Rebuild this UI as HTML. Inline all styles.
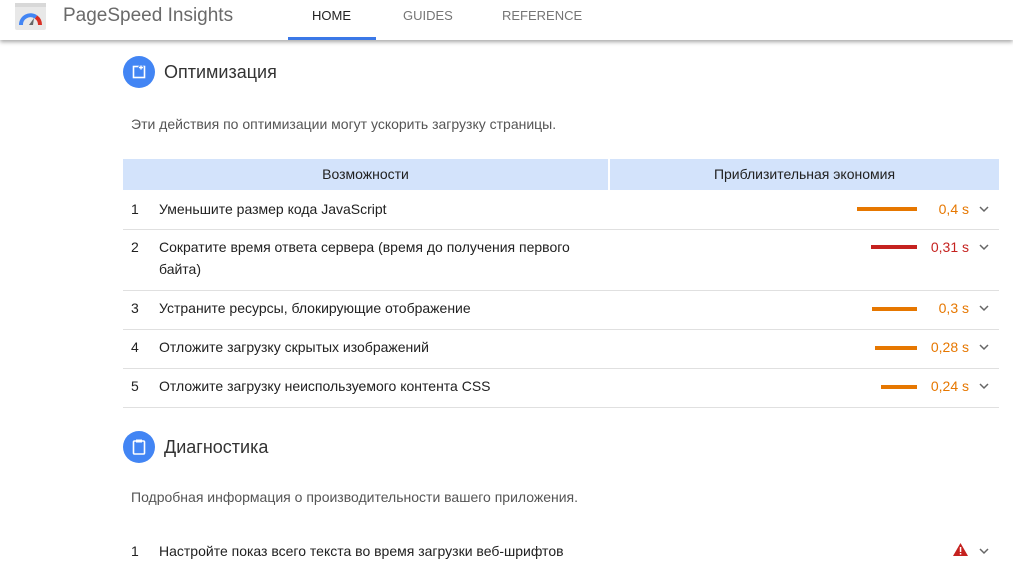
<!DOCTYPE html>
<html><head><meta charset="utf-8"><style>
*{margin:0;padding:0;box-sizing:border-box}
body{width:1013px;height:565px;overflow:hidden;background:#fff;font-family:"Liberation Sans",Arial,sans-serif;color:#212121;position:relative}
.a{position:absolute;white-space:nowrap}
.hdr{position:absolute;left:0;top:0;width:1013px;height:40px;background:#fff;box-shadow:0 2px 4px rgba(0,0,0,.35)}
.nav{font-size:13px;top:8px;color:#757575}
.row{position:absolute;left:123px;width:876px;border-bottom:1px solid #e0e0e0}
.t{font-size:14px;color:#212121}
.bar{position:absolute;height:4px}
.v{position:absolute;font-size:14px;text-align:right;width:60px;left:909px}
.chev{position:absolute;left:979px;width:10px;height:10px}
</style></head><body>
<div class="hdr">
 <svg class="a" style="left:15px;top:3px" width="31" height="27" viewBox="0 0 31 27">
  <rect x="0" y="0" width="31" height="27" rx="2" fill="#e8e8e8"/>
  <rect x="0" y="0" width="31" height="4" fill="#d8d8d8"/>
  <path d="M6 22 A9.5 9.5 0 0 1 21 14" stroke="#4285f4" stroke-width="4" fill="none"/>
  <path d="M21 14 A9.5 9.5 0 0 1 25 22" stroke="#d93025" stroke-width="4" fill="none"/>
  <path d="M14 22 L19 15 L18 22Z" fill="#666"/>
 </svg>
 <div class="a" style="left:63px;top:5px;font-size:19px;color:#6a6a6a">PageSpeed Insights</div>
 <div class="a nav" style="left:312px;color:#222">HOME</div>
 <div class="a" style="left:288px;top:37px;width:88px;height:3px;background:#3b78e7"></div>
 <div class="a nav" style="left:403px">GUIDES</div>
 <div class="a nav" style="left:502px">REFERENCE</div>
</div>

<svg class="a" style="left:123px;top:56px" width="32" height="32" viewBox="0 0 32 32"><circle cx="16" cy="16" r="16" fill="#4285f4"/><rect x="10.5" y="10.5" width="11" height="11" fill="none" stroke="#fff" stroke-width="1.6"/><path d="M18 9v5M15.5 11.5h5" stroke="#4285f4" stroke-width="3"/><path d="M18 9.5v4M16 11.5h4" stroke="#fff" stroke-width="1.4"/></svg>
<div class="a" style="left:164px;top:62px;font-size:18px;color:#333">Оптимизация</div>
<div class="a" style="left:131px;top:116px;font-size:14px;color:#555">Эти действия по оптимизации могут ускорить загрузку страницы.</div>

<div class="a" style="left:123px;top:159px;width:876px;height:31px;background:#d3e3fb"></div>
<div class="a" style="left:608px;top:159px;width:2px;height:31px;background:#fff"></div>
<div class="a t" style="left:123px;top:166px;width:485px;text-align:center">Возможности</div>
<div class="a t" style="left:610px;top:166px;width:389px;text-align:center">Приблизительная экономия</div>

<div class="row" style="top:190px;height:40px"></div>
<div class="row" style="top:230px;height:61px"></div>
<div class="row" style="top:291px;height:39px"></div>
<div class="row" style="top:330px;height:39px"></div>
<div class="row" style="top:369px;height:39px"></div>

<div class="a t" style="left:131px;top:201px">1</div><div class="a t" style="left:159px;top:201px">Уменьшите размер кода JavaScript</div>
<div class="a t" style="left:131px;top:239px">2</div><div class="a t" style="left:159px;line-height:22px;top:236px">Сократите время ответа сервера (время до получения первого<br>байта)</div>
<div class="a t" style="left:131px;top:300px">3</div><div class="a t" style="left:159px;top:300px">Устраните ресурсы, блокирующие отображение</div>
<div class="a t" style="left:131px;top:339px">4</div><div class="a t" style="left:159px;top:339px">Отложите загрузку скрытых изображений</div>
<div class="a t" style="left:131px;top:378px">5</div><div class="a t" style="left:159px;top:378px">Отложите загрузку неиспользуемого контента CSS</div>

<div class="bar" style="left:857px;width:60px;top:207px;background:#e67700"></div><div class="v" style="top:201px;color:#e67700">0,4 s</div>
<div class="bar" style="left:871px;width:46px;top:245px;background:#c5221f"></div><div class="v" style="top:239px;color:#c5221f">0,31 s</div>
<div class="bar" style="left:872px;width:45px;top:307px;background:#e67700"></div><div class="v" style="top:300px;color:#e67700">0,3 s</div>
<div class="bar" style="left:875px;width:42px;top:346px;background:#e67700"></div><div class="v" style="top:339px;color:#e67700">0,28 s</div>
<div class="bar" style="left:881px;width:36px;top:385px;background:#e67700"></div><div class="v" style="top:378px;color:#e67700">0,24 s</div>

<svg class="chev" style="top:204px" viewBox="0 0 10 10"><path d="M1 3l4 4 4-4" stroke="#666" stroke-width="1.5" fill="none"/></svg>
<svg class="chev" style="top:242px" viewBox="0 0 10 10"><path d="M1 3l4 4 4-4" stroke="#666" stroke-width="1.5" fill="none"/></svg>
<svg class="chev" style="top:303px" viewBox="0 0 10 10"><path d="M1 3l4 4 4-4" stroke="#666" stroke-width="1.5" fill="none"/></svg>
<svg class="chev" style="top:342px" viewBox="0 0 10 10"><path d="M1 3l4 4 4-4" stroke="#666" stroke-width="1.5" fill="none"/></svg>
<svg class="chev" style="top:381px" viewBox="0 0 10 10"><path d="M1 3l4 4 4-4" stroke="#666" stroke-width="1.5" fill="none"/></svg>

<svg class="a" style="left:123px;top:431px" width="32" height="32" viewBox="0 0 32 32"><circle cx="16" cy="16" r="16" fill="#4285f4"/><rect x="10.5" y="10" width="11" height="13" rx="1" fill="none" stroke="#fff" stroke-width="1.6"/><rect x="13" y="8.5" width="6" height="3" fill="#fff"/></svg>
<div class="a" style="left:164px;top:437px;font-size:18px;color:#333">Диагностика</div>
<div class="a" style="left:131px;top:489px;font-size:14px;color:#555">Подробная информация о производительности вашего приложения.</div>
<div class="a t" style="left:131px;top:543px">1</div><div class="a t" style="left:159px;top:543px">Настройте показ всего текста во время загрузки веб-шрифтов</div>
<svg class="a" style="left:953px;top:543px" width="15" height="13" viewBox="0 0 15 13"><path d="M7.5 0L15 13H0Z" fill="#c5221f"/><rect x="6.8" y="4" width="1.5" height="5" fill="#fff"/><rect x="6.8" y="10" width="1.5" height="1.5" fill="#fff"/></svg>
<svg class="chev" style="top:546px" viewBox="0 0 10 10"><path d="M1 3l4 4 4-4" stroke="#666" stroke-width="1.5" fill="none"/></svg>
</body></html>
